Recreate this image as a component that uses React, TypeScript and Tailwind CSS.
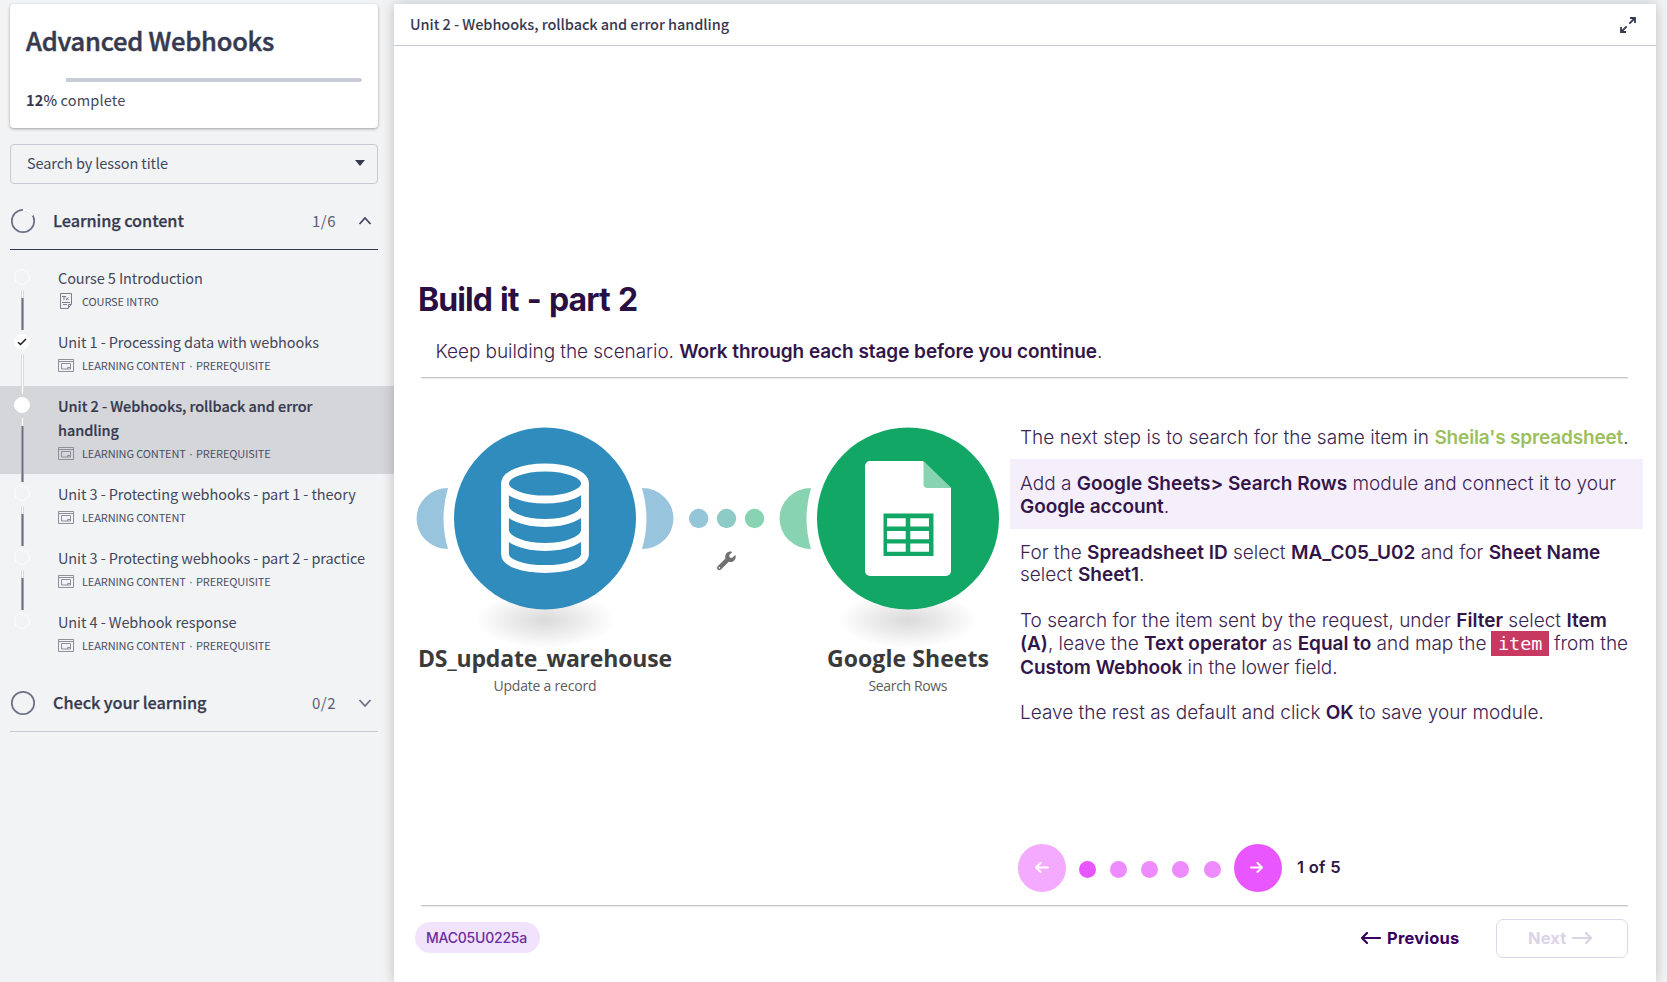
import React from "react";

const SANS = "font-['Noto_Sans_CJK_SC',sans-serif]";

function TextDocIcon() {
  return (
    <svg width="14" height="18" viewBox="0 0 14 18" fill="none" stroke="#7b7e91" strokeWidth="1">
      <path d="M1.500 1.500h11v10.500l-3.500 4.500H1.500z" />
      <path d="M12.500 12.500h-3v4M3 4.500h4M5 4.500v3.500M7 5.500l2.500 2.500M9.500 5.500l-2.500 2.500M3 10.500h8M4 12.500h4" />
    </svg>
  );
}

function WindowIcon() {
  return (
    <svg width="16" height="13" viewBox="0 0 16 13" fill="none" stroke="#8d8f9d" strokeWidth="1">
      <path d="M.5 .5h15v12H.5zM.5 2.500h15M3.500 4.500h9v5.500h-9z" />
      <path d="M9.500 10v-1.500h3" />
    </svg>
  );
}

type Status = "open" | "done" | "current";
type Seg = "none" | "dark" | "white";
const segClass: Record<Seg, string> = {
  none: "bg-transparent",
  dark: "bg-[#6a6d81] border-x border-[#a2a4b0]",
  white: "bg-white border-x border-[#dadbdf]",
};

function Lesson({ lines, kind, required, status = "open", before, after, intro }: {
  lines: string[]; kind: string; required?: boolean; status?: Status; before: Seg; after: Seg; intro?: boolean;
}) {
  const current = status === "current";
  return (
    <li className={`flex ${current ? "h-[88px] bg-[#d5d6da]" : "h-16"}`}>
      <div className="ml-[14px] flex w-4 flex-col items-center">
        <div className={`h-2 w-[3px] ${segClass[before]}`} />
        <div className={`flex size-4 shrink-0 items-center justify-center rounded-full border border-white ${status === "done" ? "mt-1 mb-1" : "mt-[3px] mb-[5px]"} ${status === "open" ? "" : "bg-white"}`}>
          {status === "done" && (
            <svg width="10" height="8" viewBox="0 0 10 8" fill="none" stroke="#1c1c1c" strokeWidth="1.500"><path d="M1 4.200 3.500 6.500 9 1" /></svg>
          )}
        </div>
        {after !== "none" && <div className={`h-2 w-[3px] ${segClass.white}`} />}
        <div className={`w-[3px] flex-1 ${segClass[after]}`} />
      </div>
      <div className="ml-7 pt-2 whitespace-nowrap">
        {lines.map((l) => (
          <div key={l} className={`h-6 text-[14.500px] leading-6 ${current ? "font-medium tracking-[-0.070px] text-[#363a50] [-webkit-text-stroke:0.2px_#363a50]" : "tracking-[-0.090px] text-[#44475c]"}`}>{l}</div>
        ))}
        <div className="mt-px flex h-5 items-center">
          <div className="flex w-6 items-center">{intro ? <span className="ml-px"><TextDocIcon /></span> : <WindowIcon />}</div>
          <span className="text-[11px] leading-5 tracking-[-0.120px] text-[#4b4e62]">
            {kind}
            {required && <><span className="px-px font-['Open_Sans',sans-serif]">&nbsp;·&nbsp;</span>PREREQUISITE</>}
          </span>
        </div>
      </div>
    </li>
  );
}

function Illustration() {
  return (
    <svg width="584" height="300" viewBox="416 410 584 300" className="font-['Open_Sans','Noto_Sans',sans-serif]">
      <defs>
        <radialGradient id="shade"><stop offset="0" stopColor="#dadada" /><stop offset=".5" stopColor="#ececec" /><stop offset="1" stopColor="#fff" /></radialGradient>
      </defs>
      <ellipse cx="545" cy="620" rx="70" ry="28" fill="url(#shade)" />
      <ellipse cx="908" cy="620" rx="70" ry="28" fill="url(#shade)" />
      <path d="M448 488a31.500 30.500 0 0 0 0 61q-9-30 0-61z" fill="#98c4de" />
      <path d="M642 488a31.500 30.500 0 0 1 0 61q9-30 0-61z" fill="#98c4de" />
      <path d="M811 488a31.500 30.500 0 0 0 0 61q-9-30 0-61z" fill="#88d3b1" />
      <circle cx="545" cy="518.500" r="91" fill="#308cbc" />
      <circle cx="908" cy="518.500" r="91" fill="#12a764" />
      <g fill="none" stroke="#fff" strokeWidth="7.800">
        <ellipse cx="545" cy="483.500" rx="40" ry="16" />
        <path d="M505 483v71c0 9 18 15 40 15s40-6 40-15v-71" />
        <path d="M505 507c2 9 19 16 40 16s38-7 40-16M505 531c2 9 19 16 40 16s38-7 40-16" />
      </g>
      <circle cx="698.700" cy="518.500" r="9.700" fill="#95c5d9" />
      <circle cx="726.500" cy="518.500" r="9.700" fill="#8fcbc6" />
      <circle cx="754.500" cy="518.500" r="9.700" fill="#88d3b1" />
      <g transform="translate(717 551.500) scale(.0365)">
        <path fill="#707070" d="M507.700 109.100c-2.200-9-13.500-12.100-20.100-5.500l-74.400 74.400-67.900-11.300L334 98.900l74.400-74.400c6.600-6.600 3.400-17.900-5.700-20.200-47.400-11.700-99.600.9-136.600 37.900-39.600 39.600-50.500 97.100-34.100 147.200L18.700 402.800c-25 25-25 65.500 0 90.500s65.500 25 90.500 0l213.200-213.200c50.100 16.700 107.500 5.700 147.400-34.200 37.100-37.100 49.700-89.300 37.900-136.800zM64 472c-13.300 0-24-10.800-24-24s10.700-24 24-24 24 10.700 24 24-10.700 24-24 24z" />
      </g>
      <path d="M870 461h53l28 27v83a5 5 0 0 1-5 5h-76a5 5 0 0 1-5-5V466a5 5 0 0 1 5-5z" fill="#fff" />
      <path d="M923.500 461v23a4 4 0 0 0 4 4H951z" fill="#88d3b1" />
      <path d="M883.500 513.500h50v42.500h-50z" fill="#12a764" />
      <path d="M887 518.300h18.700v8.200H887zm23.300 0H929v8.200h-18.700zM887 531h18.700v8.200H887zm23.300 0H929v8.200h-18.700zM887 543.500h18.700v8.200H887zm23.300 0H929v8.200h-18.700z" fill="#fff" />
      <g textAnchor="middle" fill="#3a3a3a">
        <text x="545" y="666.500" fontSize="23" fontWeight="700" textLength="254">DS_update_warehouse</text>
        <text x="908" y="666.500" fontSize="23" fontWeight="700" textLength="162">Google Sheets</text>
        <text x="545" y="691" fontSize="14" fill="#5c5c5c" textLength="103">Update a record</text>
        <text x="908" y="691" fontSize="14" fill="#5c5c5c" textLength="79">Search Rows</text>
      </g>
    </svg>
  );
}

function Arrow({ w, h, sw, left }: { w: number; h: number; sw: number; left?: boolean }) {
  const m = h / 2;
  const r = m - 1;
  return (
    <svg width={w} height={h} viewBox={`0 0 ${w} ${h}`} fill="none" stroke="currentColor" strokeWidth={sw} strokeLinecap="round" strokeLinejoin="round" className={left ? "-scale-x-100" : ""}>
      <path d={`M1 ${m}H${w - 1}M${w - 1 - r} 1L${w - 1} ${m}L${w - 1 - r} ${h - 1}`} />
    </svg>
  );
}

function B({ children }: { children: React.ReactNode }) {
  return <b className="font-semibold text-[#32164a]">{children}</b>;
}

function Rule({ className }: { className: string }) {
  return <div className={`mr-7 ml-[27px] h-[2px] shrink-0 border-t border-[#cbc6c8] bg-[#efedee] ${className}`} />;
}

export default function App() {
  return (
    <div className={`flex h-[982px] w-[1667px] overflow-hidden bg-[#f1f3f5] ${SANS}`}>
      <aside className="flex w-[394px] shrink-0 flex-col pt-1 whitespace-nowrap">
        <section className="mx-[10px] flex h-[124px] w-[368px] flex-col rounded bg-white px-4 shadow-[0_1px_3px_rgba(0,0,0,0.35)]">
          <h1 className="mt-4 h-10 text-[25.500px] leading-10 font-medium tracking-[-0.230px] text-[#363a50] [-webkit-text-stroke:0.5px_#363a50]">Advanced Webhooks</h1>
          <div className="mt-[18px] ml-10 h-1 w-[296px] rounded-r-full bg-[#c9cbd6]" />
          <p className="mt-[6px] h-6 text-[14.500px] leading-6 tracking-[0.150px] text-[#44475c]"><span className="font-bold text-[#363a50]">12</span><span className="font-medium text-[#363a50]">%</span> complete</p>
        </section>
        <div className="mx-[10px] mt-4 flex h-10 w-[368px] shrink-0 items-center justify-between rounded border border-[#c7cad6] pr-3 pb-[2px] pl-4">
          <span className="text-[14.500px] tracking-[-0.090px] text-[#44475c]">Search by lesson title</span>
          <svg width="10" height="6" viewBox="0 0 10 6"><path d="M0 0h10L5 6z" fill="#363a50" /></svg>
        </div>
        <div className="mx-[10px] mt-[10px] flex h-14 w-[368px] shrink-0 items-center border-b border-[#363a50]">
          <svg width="26" height="26" viewBox="0 0 26 26" fill="none" strokeWidth="1.700" className="-mt-px"><circle cx="13" cy="13" r="11.200" stroke="#6e7186" /><path d="M13 1.800A11.200 11.200 0 0 1 22.700 7.400" stroke="#f1f3f5" strokeWidth="2.200" /><path d="M13 1.800A11.200 11.200 0 0 1 22.700 7.400" stroke="#fff" /></svg>
          <div className="ml-[17px] flex-1 pb-[3px] text-[16.300px] font-medium tracking-[-0.080px] text-[#363a50] [-webkit-text-stroke:0.25px_#363a50]">Learning content</div>
          <span className="mr-[22px] text-[15px] tracking-[0.490px] text-[#5b5e72]">1/6</span>
          <svg className="mr-[6px] -mt-px" width="14" height="10" viewBox="0 0 14 10" fill="none" stroke="#44475c" strokeWidth="1.800"><path d="M1.500 8 7 2l5.500 6" /></svg>
        </div>
        <ul className="mt-2 flex flex-col">
          <Lesson intro lines={["Course 5 Introduction"]} kind="COURSE INTRO" before="none" after="dark" />
          <Lesson lines={["Unit 1 - Processing data with webhooks"]} kind="LEARNING CONTENT" required status="done" before="dark" after="white" />
          <Lesson lines={["Unit 2 - Webhooks, rollback and error", "handling"]} kind="LEARNING CONTENT" required status="current" before="white" after="dark" />
          <Lesson lines={["Unit 3 - Protecting webhooks - part 1 - theory"]} kind="LEARNING CONTENT" before="dark" after="dark" />
          <Lesson lines={["Unit 3 - Protecting webhooks - part 2 - practice"]} kind="LEARNING CONTENT" required before="dark" after="dark" />
          <Lesson lines={["Unit 4 - Webhook response"]} kind="LEARNING CONTENT" required before="dark" after="none" />
        </ul>
        <div className="mx-[10px] mt-[10px] flex h-14 w-[368px] shrink-0 items-center border-b border-[#c7cad6]">
          <svg width="26" height="26" viewBox="0 0 26 26" fill="none" stroke="#6e7186" strokeWidth="1.700" className="-mt-px"><circle cx="13" cy="13" r="11.200" /></svg>
          <div className="ml-[17px] flex-1 pb-[3px] text-[16.300px] font-medium tracking-[-0.070px] text-[#363a50] [-webkit-text-stroke:0.25px_#363a50]">Check your learning</div>
          <span className="mr-[22px] text-[15px] tracking-[0.490px] text-[#5b5e72]">0/2</span>
          <svg className="mr-[6px] -mt-px" width="14" height="10" viewBox="0 0 14 10" fill="none" stroke="#6e7186" strokeWidth="1.800"><path d="M1.500 2 7 8l5.500-6" /></svg>
        </div>
      </aside>

      <main className="mt-1 flex h-[978px] w-[1262px] flex-col bg-white shadow-[0_0_12px_rgba(0,0,0,0.22)]">
        <header className="flex h-[42px] shrink-0 items-center justify-between border-b border-[#c7cad6] pr-5 pl-4">
          <span className="pb-px text-[14.500px] font-medium tracking-[-0.060px] text-[#363a50]">Unit 2 - Webhooks, rollback and error handling</span>
          <svg width="16" height="16" viewBox="0 0 16 16" fill="none" stroke="#363a50" strokeWidth="1.800"><path d="M10 1h5v5M15 1 9.300 6.700M6 15H1V10M1 15l5.700-5.700" /></svg>
        </header>
        <div className="flex flex-1 flex-col pt-[230px] font-['Inter',sans-serif] whitespace-nowrap text-[#3b2352]">
          <h2 className="ml-6 h-12 text-[32px] leading-[48px] font-bold tracking-[-0.950px] text-[#2a0f42] [word-spacing:1.600px]">Build it - part 2</h2>
          <p className="mt-3 ml-[41.500px] h-8 text-[19px] leading-8 font-light tracking-[-0.060px]">Keep building the scenario. <B>Work through each stage before you continue</B>.</p>
          <Rule className="mt-[9px]" />
          <div className="mt-[30.500px] flex">
            <div className="ml-[22px] shrink-0"><Illustration /></div>
            <div className="ml-[10px] flex w-[633px] flex-col pt-4 text-[19px] leading-[23px] font-light">
              <p className="px-[10px] tracking-[0.040px]">The next step is to search for the same item in <b className="font-semibold tracking-[-0.160px] text-[#9cbf5d]">Sheila's spreadsheet</b>.</p>
              <p className="mt-[10.500px] bg-[#f5effc] px-[10px] pt-[13px] pb-[10.500px]">Add a <B>Google Sheets&gt; Search Rows</B> module and connect it to your<br /><span className="tracking-[-0.080px]"><B>Google account</B>.</span></p>
              <p className="mt-[13px] px-[10px] leading-[22px]">For the <B>Spreadsheet ID</B> select <B>MA_C05_U02</B> and for <B>Sheet Name</B><br />select <B>Sheet1</B>.</p>
              <p className="mt-[23px] px-[10px] leading-[23.500px]"><span className="tracking-[0.015px]">To search for the item sent by the request, under <B>Filter</B> select <B>Item</B></span><br />
                <span className="tracking-[-0.020px]"><B>(A)</B>, leave the <B>Text operator</B> as <B>Equal to</B> and map the</span><span className="mx-[4.500px] bg-[#c83962] px-[7px] py-[2px] font-['DejaVu_Sans_Mono',monospace] text-[18.500px] leading-none text-white">item</span>from the<br />
                <span className="tracking-[-0.060px]"><B>Custom Webhook</B> in the lower field.</span></p>
              <p className="mt-[21.500px] px-[10px]">Leave the rest as default and click <B>OK</B> to save your module.</p>
              <div className="mt-[120px] ml-2 flex h-12 items-center">
                <button className="flex size-12 items-center justify-center rounded-full bg-[#f3aaff] pb-px text-white"><Arrow left w={14} h={11} sw={2} /></button>
                <div className="mt-[3px] ml-[12.500px] flex gap-[14.300px]">
                  <i className="size-[17px] rounded-full bg-[#e755ff]" />
                  <i className="size-[17px] rounded-full bg-[#ee8bff]" />
                  <i className="size-[17px] rounded-full bg-[#ee8bff]" />
                  <i className="size-[17px] rounded-full bg-[#ee8bff]" />
                  <i className="size-[17px] rounded-full bg-[#ee8bff]" />
                </div>
                <button className="ml-[13.300px] flex size-12 items-center justify-center rounded-full bg-[#e955ff] pr-[2px] pb-px text-white"><Arrow w={13} h={11} sw={2} /></button>
                <span className="ml-[15px] pb-px text-[16.500px] font-semibold tracking-[0.300px] text-[#32164a]">1 of 5</span>
              </div>
            </div>
          </div>
          <Rule className="mt-[13px]" />
          <footer className="mt-3 mr-7 ml-[21px] flex h-[39px] items-center">
            <span className="-mt-px flex h-[31px] w-[125px] items-center justify-center rounded-full bg-[#f0e3fb] pr-[2px] pb-px text-[14px] font-medium tracking-[-0.220px] text-[#6b2c9e]">MAC05U0225a</span>
            <div className="ml-auto flex items-center text-[16.500px] font-bold text-[#36005f]"><Arrow left w={20} h={12} sw={2.200} /><span className="ml-[6px] tracking-[0.240px]">Previous</span></div>
            <div className="ml-[36px] flex h-[39px] w-[132.500px] items-center justify-center rounded-[7px] border border-[#e0d6ea] pr-[3px] text-[16.500px] font-bold text-[#dcd3e6]"><span className="mr-[6px] tracking-[0.140px]">Next</span><Arrow w={20} h={12} sw={2.200} /></div>
          </footer>
        </div>
      </main>
    </div>
  );
}
